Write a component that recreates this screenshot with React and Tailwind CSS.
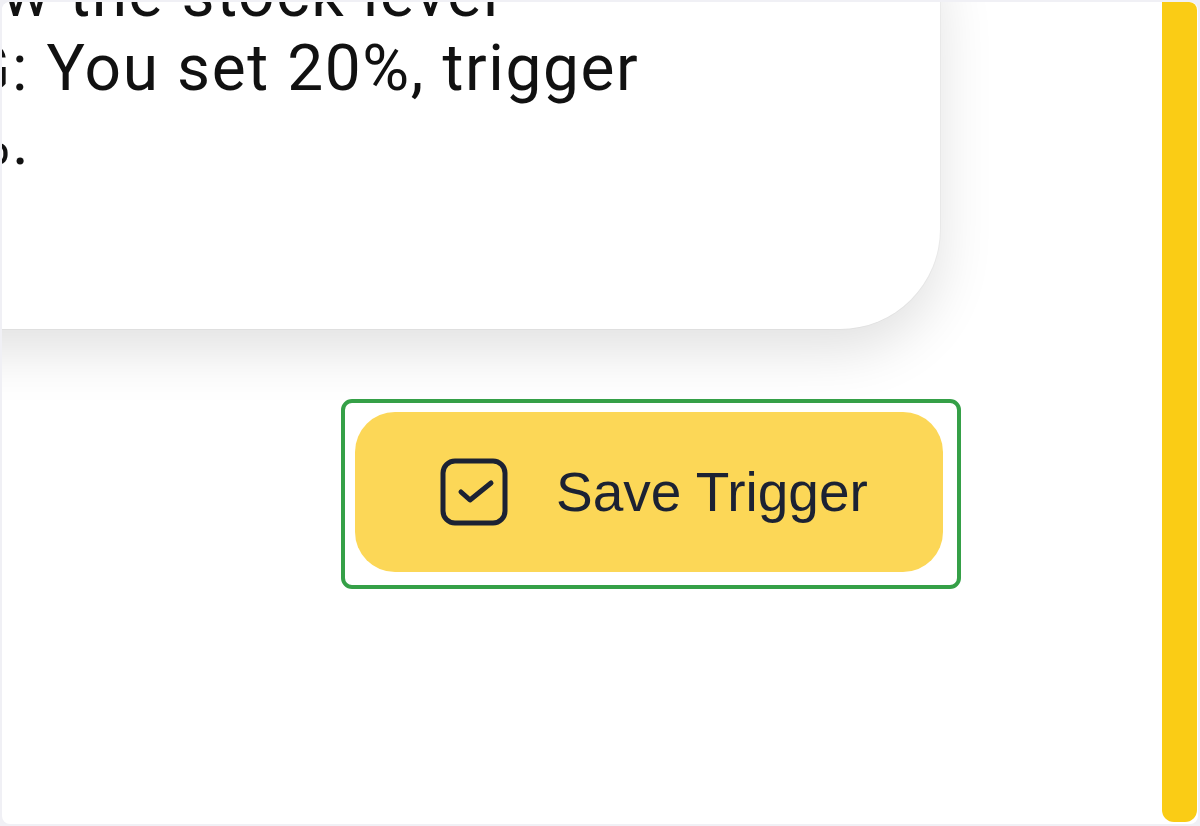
// one text line, split where the visible part begins; the prefix runs off to the left
const Line = ({ hidden, shown, at }) => (
  <div className="flex whitespace-nowrap h-[74px] items-center" style={{ paddingLeft: at }}>
    <span className="w-0 flex justify-end">{hidden}</span>
    <span>{shown}</span>
  </div>
);

const CheckBox = () => (
  <svg width="68" height="68" viewBox="0 0 68 68" fill="none" stroke="#1c2233" strokeWidth="5" strokeLinecap="round" strokeLinejoin="round">
    <rect x="3" y="3" width="62" height="62" rx="12" />
    <path d="M21 34 L30 42 L51 25" />
  </svg>
);

export default function App() {
  return (
    <div className="w-[1200px] h-[826px] overflow-hidden bg-[#f0f0f5] p-[2px]">
      <div className="h-full flex bg-white rounded-[8px] overflow-hidden">
        <div className="flex-1 flex flex-col min-w-0">
          <div className="-mt-[100px] -ml-[200px] mr-[222px] bg-white rounded-[100px] shadow-[0_0_0_1px_rgba(0,0,0,0.03),0_22px_55px_rgba(0,0,0,0.12)] pt-[56px] pb-[149px] pl-[198px] text-[64px] leading-[74px] tracking-[1.6px] text-[#111111] font-['Roboto',sans-serif]">
            <Line hidden="Triggers when the stock falls belo" shown="w the stock level" at={2} />
            <Line hidden="E.G" shown=": You set 20%, trigger" at={12} />
            <Line hidden="at 20%" shown="." at={12} />
          </div>
          <div className="self-end mt-[70px] mr-[201px] border-[4px] border-[#35a047] rounded-[11px] pt-[9px] pl-[10px] pr-[14px] pb-[13px]">
            <button className="w-[588px] h-[160px] rounded-[40px] bg-[#fcd757] flex items-center pl-[85px] gap-[48px] text-[#1c2233] text-[55px] font-['Liberation_Sans',Arial,sans-serif]">
              <CheckBox />
              <span>Save Trigger</span>
            </button>
          </div>
        </div>
        <div className="w-[35px] shrink-0 mb-[2px] mr-[1px] bg-[#facc15] rounded-tr-[8px] rounded-b-[12px]" />
      </div>
    </div>
  );
}
